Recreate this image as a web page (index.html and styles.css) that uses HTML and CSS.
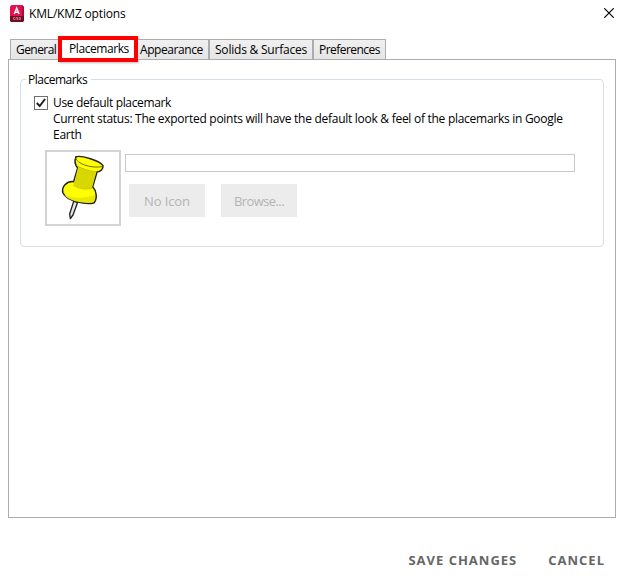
FILE: index.html
```html
<!DOCTYPE html>
<html lang="en">
<head>
<meta charset="utf-8">
<title>KML/KMZ options</title>
<link rel="stylesheet" href="styles.css">
</head>
<body>
<div class="dialog">
  <header class="titlebar">
    <svg class="app-icon" width="14" height="17" viewBox="0 0 14 17">
      <path fill="#e51050" d="M1.500 0H12l2 2v9H0V1.500z"/>
      <path fill="#740c28" d="M0 11h14v5l-1 1H1l-1-1z"/>
      <path fill="#a90b3c" d="M12 0l2 2v9h-2z"/>
      <path fill="none" stroke="#fff" stroke-width="1.400" d="M4.300 9L6.700 3.200 9.100 9M5.200 7.200h3"/>
      <path fill="none" stroke="#c58395" stroke-width=".8" d="M5 12.500H3.500v2H5M6 15v-2.500h1.500V15M9 12.500v2h1.500v-2z"/>
    </svg>
    <h1 class="title">KML/KMZ options</h1>
    <svg class="close" width="10" height="10" viewBox="0 0 10 10"><path fill="none" stroke="#000" stroke-width="1.150" d="M.3.300l9.400 9.400M9.700.300L.3 9.700"/></svg>
  </header>
  <nav class="tabs">
    <div class="tab general"><span>General</span></div>
    <div class="tab selected"><span>Placemarks</span></div>
    <div class="tab appearance"><span>Appearance</span></div>
    <div class="tab solids"><span>Solids &amp; Surfaces</span></div>
    <div class="tab preferences"><span>Preferences</span></div>
  </nav>
  <main class="panel">
    <section class="group">
      <h2 class="legend"><span>Placemarks</span></h2>
      <div class="option">
        <svg class="check" width="14" height="14" viewBox="0 0 14 14"><rect x=".5" y=".5" width="13" height="13" fill="#fff" stroke="#707070"/><path fill="none" stroke="#212121" stroke-width="2" d="M2.800 7l2.900 3 5.400-7"/></svg>
        <div class="copy">
          <div class="use">Use default placemark</div>
          <div class="status">Current status: The exported points will have the default look &amp; feel of the placemarks in Google</div>
          <div class="earth">Earth</div>
        </div>
      </div>
      <div class="chooser">
        <div class="preview">
          <svg width="72" height="72" viewBox="33 36 216 216">
            <path fill="#e4e4e4" stroke="#222" stroke-width="4" stroke-linejoin="round" d="M113 184L101 222l2 14 8-11 14-38z"/>
            <path fill="#ff0" stroke="#222" stroke-width="4.500" stroke-linejoin="round" d="M119 51C132 44 191 62 201 77c1 10-7 19-18 19l-13 44c12 12 14 36 5 48-24 8-83-5-94-29-6-18 11-36 32-34l12-41c-8-10-10-22-5-33z"/>
            <path fill="#d8d800" d="M127 79c15 9 37 15 54 16l-13 49c-15 6-42 1-55-10z"/>
            <path fill="#e8e800" d="M84 164c22 12 58 12 94 1 0 9-1 15-5 21-25 6-74-2-89-22z"/>
            <path fill="none" stroke="#6c6c00" stroke-width="3" d="M119 54c3 15 42 32 80 26"/>
            <path fill="none" stroke="#b5b500" stroke-width="2" d="M121 76c15 10 40 18 61 19M111 135c13 10 39 16 58 9"/>
          </svg>
        </div>
        <div class="controls">
          <div class="path-field"></div>
          <div class="buttons"><div class="button"><span class="no-icon">No Icon</span></div><div class="button"><span class="browse">Browse...</span></div></div>
        </div>
      </div>
    </section>
  </main>
  <footer class="actions"><span class="save">SAVE CHANGES</span><span class="cancel">CANCEL</span></footer>
</div>
</body>
</html>
```
FILE: styles.css
```css
* { box-sizing: border-box; }
body { margin: 0; background: #fff; color: #000; font: 12px/16px "Open Sans", "Noto Sans", sans-serif; overflow: hidden; }
h1, h2 { margin: 0; font: inherit; }
span, .title, .copy > div { white-space: nowrap; }
.dialog { width: 622px; height: 587px; display: flex; flex-direction: column; }
.titlebar { height: 36px; flex: none; display: flex; align-items: flex-start; padding: 5px 8px 0 10px; }
.title { margin: 1px 0 0 5px; letter-spacing: -.17px; }
.close { margin: 3px 0 0 auto; }
.tabs { height: 26px; flex: none; display: flex; padding-left: 10px; position: relative; z-index: 1; }
.tab { height: 21px; margin-top: 3px; border: 1px solid #acacac; border-left-width: 0; background: linear-gradient(#f0f0f0, #e5e5e5); padding: 2px 0 0 5px; letter-spacing: -.42px; }
.general { width: 48px; border-left-width: 1px; border-right: 0; letter-spacing: -.55px; }
.selected { width: 80px; height: 26px; margin: 0; border: 4px solid #f00; background: #fff; padding: 1px 0 0 7px; box-shadow: 1px 1px 2px #bbb; }
.appearance { width: 71px; padding-left: 2px; }
.solids { width: 104px; padding-left: 5px; border-left-width: 1px; letter-spacing: -.21px; }
.preferences { width: 73px; padding-left: 5px; border-left-width: 1px; letter-spacing: -.55px; }
.panel { width: 608px; height: 459px; flex: none; margin: -3px 0 0 8px; border: 1px solid #acacac; padding: 19px 11px; }
.group { height: 168px; border: 1px solid #d5dfe5; border-radius: 4px; padding-left: 13px; }
.legend { margin: -8px 0 0 -8px; height: 16px; }
.legend span { background: #fff; padding: 0 4px 0 2px; letter-spacing: -.5px; }
.option { display: flex; margin-top: 7px; }
.check { margin-top: 1px; flex: none; }
.copy { margin-left: 5px; letter-spacing: -.275px; }
.use { letter-spacing: -.35px; }
.chooser { display: flex; margin: 7px 0 0 11px; }
.preview { width: 76px; height: 76px; border: 2px solid #d3d3d3; }
.preview svg { display: block; }
.controls { margin: 4px 0 0 4px; }
.path-field { width: 450px; height: 18px; border: 1px solid #c8c8c8; }
.buttons { display: flex; gap: 16px; margin: 12px 0 0 4px; }
.button { width: 76px; height: 33px; display: flex; align-items: center; justify-content: center; background: #ececec; color: #b4b4b4; font-size: 13px; padding-top: 1px; }
.no-icon { letter-spacing: -.1px; }
.browse { letter-spacing: -.6px; }
.actions { display: flex; justify-content: flex-end; gap: 31px; padding: 33px 17px 0 0; color: #666; font-size: 13px; line-height: 18px; font-weight: 700; letter-spacing: 1px; }
.cancel { letter-spacing: 1px; }
```
